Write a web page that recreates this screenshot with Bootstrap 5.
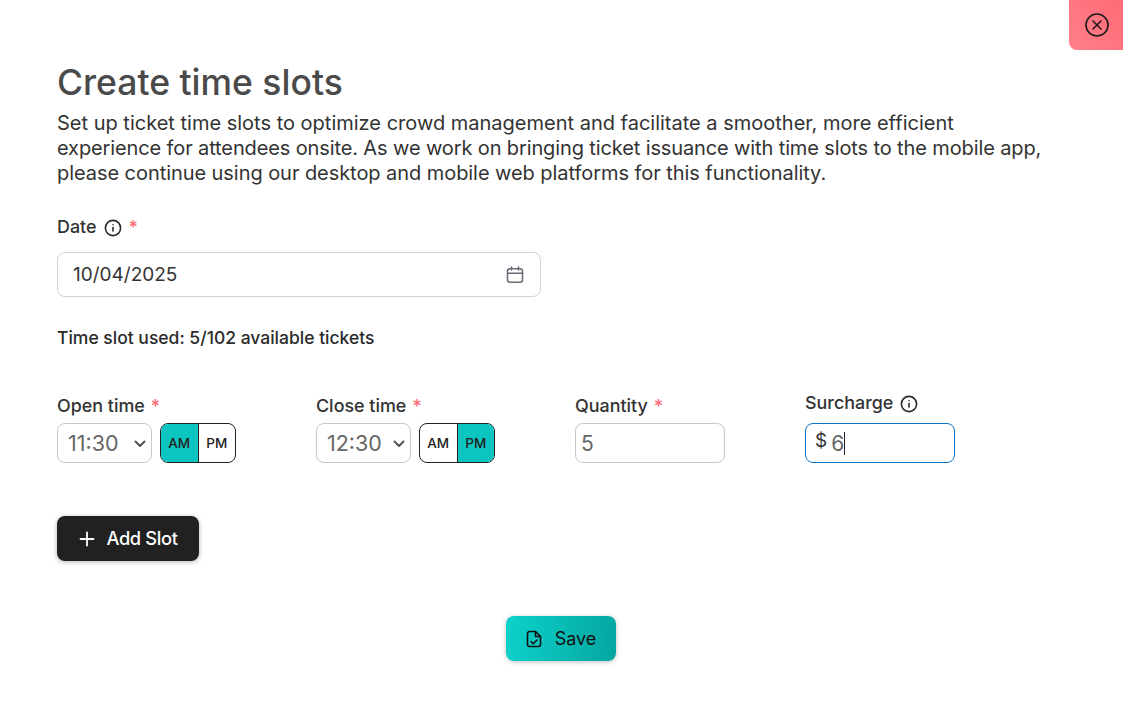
<!DOCTYPE html>
<html lang="en">
<head>
<meta charset="utf-8">
<title>Create time slots</title>
<link href="https://cdn.jsdelivr.net/npm/bootstrap@5.3.0/dist/css/bootstrap.min.css" rel="stylesheet">
<style>
html,body{height:100%;overflow:hidden;background:#fff}
body{font-family:Inter,"Liberation Sans",sans-serif;color:#212121}
.sheet{position:relative;height:708px;padding:58px 58px 0 57px}
.close-tab{position:absolute;top:0;right:0;width:54px;height:50px;border:0;padding:0 0 0 2px;border-radius:0 0 0 8px;background:linear-gradient(45deg,#ff8089,#ff6a78);display:flex;align-items:center;justify-content:center}
.page-title{font-size:35.5px;line-height:49px;font-weight:500;color:#4a4a4a;margin:0}
.intro{font-size:20px;line-height:25px;color:#333;margin:4px 0 29px;width:1010px}
.tight{letter-spacing:-.12px}
.tight-b{letter-spacing:-.06px}
.fld-label{font-size:17.900px;line-height:24px;font-weight:500;color:#333;margin:0;display:flex;align-items:flex-start}
.req{color:#ff6b78;margin:3px 0 0 6px;font-size:18px;line-height:20px}
.info{margin-left:6px;margin-top:3px;flex:none;width:20px;height:20px}
.date-box{width:484px;height:45px;margin-top:13px;border:1px solid #d0d2dc;border-radius:8px;display:flex;align-items:center;justify-content:space-between;padding:1px 16px 0 15px;font-size:19px;color:#333}
.used{font-size:17.500px;line-height:24px;font-weight:500;color:#2b2b2b;margin:29px 0 44px}
.slots{height:122px}
.slot{flex:none}
.slot-a{width:259px}
.slot-b{width:259px}
.slot-c{width:230px}
.ctl-row{margin-top:5px;height:40px;gap:8px}
.tm-select{width:95px;height:40px;border:1px solid #c8c8c8;border-radius:8px;font-size:21.500px;color:#666;padding:1px 5px 0 10px;display:flex;align-items:center;justify-content:space-between}
.ampm{display:flex;width:76px;height:40px;border:1px solid #222;border-radius:8px;overflow:hidden;font-size:13.500px;font-weight:500;color:#222}
.ampm span{flex:1;display:flex;align-items:center;justify-content:center}
.ampm span+span{border-left:1px solid #222}
.ampm .on{background:#0bc5c0}
.qty{width:150px;height:40px;margin-top:5px;border:1px solid #c8c8c8;border-radius:8px;font-size:21px;color:#666;padding:1px 5px 0;display:flex;align-items:center}
.sur{margin-top:-3px}
.sur-box{width:150px;height:40px;margin-top:8px;border:1px solid #0a74c4;border-radius:8px;font-size:21px;color:#666;padding:1px 9px 0;display:flex;align-items:center}
.sur-box .cur{font-size:19px;color:#333;margin-right:4px;position:relative;top:-2px}
.caret-bar{display:inline-block;width:1px;height:23px;background:#222}
.btn-add{width:142px;height:45px;background:#212121;color:#fff;border:0;border-radius:8px;font-size:18.300px;font-weight:500;letter-spacing:-.02em;box-shadow:0 1px 5px rgba(0,0,0,.3);display:flex;align-items:center;justify-content:center;gap:11px;padding:0 0 0 1px}
.btn-add:hover{background:#212121;color:#fff}
.save-wrap{margin-top:55px}
.btn-save{width:110px;height:45px;background:linear-gradient(100deg,#0cd2cb,#05a5a0);border:0;border-radius:8px;font-size:18px;color:#111;box-shadow:0 1px 5px rgba(0,0,0,.25);display:flex;align-items:center;justify-content:center;gap:13px;padding:0}
</style>
</head>
<body>
<div class="sheet">
  <button type="button" class="close-tab" aria-label="Close">
    <svg width="24" height="24" viewBox="0 0 24 24" fill="none" stroke="#1a1a1a" stroke-width="1.6" stroke-linecap="round"><circle cx="12" cy="12" r="11"/><path d="M8 8l8 8M16 8l-8 8"/></svg>
  </button>
  <h1 class="page-title">Create time slots</h1>
  <p class="intro">Set up ticket time slots to optimize crowd management and facilitate a smoother, more efficient<br><span class="tight">experience for attendees onsite. As we work on bringing ticket issuance with time slots to the mobile app,</span><br><span class="tight-b">please continue using our desktop and mobile web platforms for this functionality.</span></p>

  <div class="fld-label">Date
    <svg class="info" viewBox="0 0 20 20" fill="none" stroke="#2b2b2b" stroke-width="1.6" stroke-linecap="round"><circle cx="10" cy="10" r="7.600"/><path d="M10 9.500v3.500"/><path d="M10 6.700v.1"/></svg>
    <span class="req">*</span>
  </div>
  <div class="date-box">10/04/2025
    <svg width="18" height="18" viewBox="0 0 18 18" fill="none" stroke="#666b75" stroke-width="1.5" stroke-linecap="round"><rect x="1.500" y="2.800" width="15" height="13.400" rx="2.500"/><path d="M1.500 7.200h15M5.500 1v3M12.500 1v3"/></svg>
  </div>
  <p class="used">Time slot used: 5/102 available tickets</p>

  <div class="d-flex slots">
    <div class="slot slot-a">
      <div class="fld-label">Open time<span class="req">*</span></div>
      <div class="d-flex ctl-row">
        <div class="tm-select">11:30<svg width="12" height="8" viewBox="0 0 12 8" fill="none" stroke="#555" stroke-width="2" stroke-linecap="round" stroke-linejoin="round"><path d="M1.500 1.500L6 6l4.500-4.500"/></svg></div>
        <div class="ampm"><span class="on">AM</span><span>PM</span></div>
      </div>
    </div>
    <div class="slot slot-b">
      <div class="fld-label">Close time<span class="req">*</span></div>
      <div class="d-flex ctl-row">
        <div class="tm-select">12:30<svg width="12" height="8" viewBox="0 0 12 8" fill="none" stroke="#555" stroke-width="2" stroke-linecap="round" stroke-linejoin="round"><path d="M1.500 1.500L6 6l4.500-4.500"/></svg></div>
        <div class="ampm"><span>AM</span><span class="on">PM</span></div>
      </div>
    </div>
    <div class="slot slot-c">
      <div class="fld-label">Quantity<span class="req">*</span></div>
      <div class="qty">5</div>
    </div>
    <div class="slot sur">
      <div class="fld-label">Surcharge
        <svg class="info" viewBox="0 0 20 20" fill="none" stroke="#2b2b2b" stroke-width="1.6" stroke-linecap="round"><circle cx="10" cy="10" r="7.600"/><path d="M10 9.500v3.500"/><path d="M10 6.700v.1"/></svg>
      </div>
      <div class="sur-box"><span class="cur">$</span>6<span class="caret-bar"></span></div>
    </div>
  </div>

  <button type="button" class="btn btn-add">
    <svg width="16" height="16" viewBox="0 0 16 16" fill="none" stroke="#fff" stroke-width="1.800" stroke-linecap="round"><path d="M8 1.500v13M1.500 8h13"/></svg>
    Add Slot
  </button>

  <div class="d-flex justify-content-center save-wrap">
    <button type="button" class="btn btn-save">
      <svg width="16" height="18" viewBox="0 0 16 18" fill="none" stroke="#111" stroke-width="1.600" stroke-linecap="round" stroke-linejoin="round"><path d="M9.500 1.500H3.500a2 2 0 0 0-2 2v11a2 2 0 0 0 2 2h9a2 2 0 0 0 2-2V6.500z"/><path d="M9.500 1.500v5h5"/><path d="M5 11.500l2.200 2.200L11 10"/></svg>
      Save
    </button>
  </div>
</div>
<script src="https://cdn.jsdelivr.net/npm/bootstrap@5.3.0/dist/js/bootstrap.bundle.min.js"></script>
</body>
</html>
